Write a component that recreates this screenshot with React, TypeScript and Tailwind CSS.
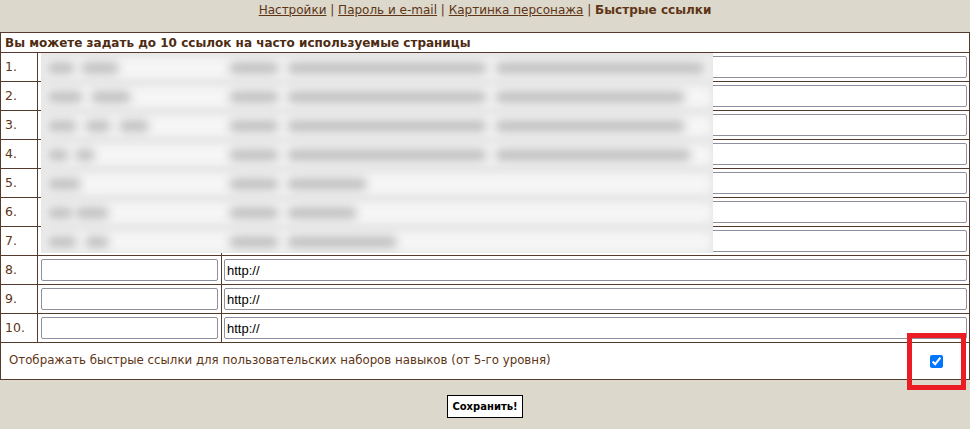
import React from 'react';

const rows = [1, 2, 3, 4, 5, 6, 7, 8, 9, 10];

// blurred redaction of rows 1-7: word segments [left, width] for name and url
const blobs: { name: [number, number][]; url: [number, number][] }[] = [
  { name: [[6, 28], [40, 38]], url: [[188, 50], [246, 200], [454, 210]] },
  { name: [[6, 36], [50, 40]], url: [[188, 50], [246, 200], [454, 190]] },
  { name: [[6, 30], [44, 26], [78, 30]], url: [[188, 50], [246, 200], [454, 190]] },
  { name: [[6, 22], [34, 20]], url: [[188, 50], [246, 200], [454, 196]] },
  { name: [[6, 34]], url: [[188, 50], [246, 80]] },
  { name: [[6, 26], [34, 34]], url: [[188, 50], [246, 70]] },
  { name: [[6, 30], [44, 24]], url: [[188, 50], [246, 110]] },
];

const Nav: React.FC = () => (
  <div className="h-[32px] pt-[1px] text-center text-[12px] text-[#5e3516]">
    <a href="#" className="underline">Настройки</a>
    <span> | </span>
    <a href="#" className="underline">Пароль и e-mail</a>
    <span> | </span>
    <a href="#" className="underline">Картинка персонажа</a>
    <span> | </span>
    <b>Быстрые ссылки</b>
  </div>
);

const Redacted: React.FC = () => (
  <div className="absolute left-[41px] top-[21px] flex h-[200px] w-[672px] flex-col overflow-hidden bg-[#e6e6e6]">
    {blobs.map((r, i) => (
      <div key={i} className="relative h-[29px] shrink-0">
        <div className="absolute left-[2px] right-[2px] top-[5px] h-[20px] bg-[#f6f6f6] blur-[5px]" />
        {[...r.name, ...r.url].map(([l, w], j) => (
          <div
            key={j}
            className="absolute top-[9px] h-[12px] rounded-full bg-[#c0c0c0] blur-[5px]"
            style={{ left: l, width: w }}
          />
        ))}
      </div>
    ))}
  </div>
);

export default function App() {
  return (
    <div className="min-h-[429px] bg-[#dcd8cb] font-['DejaVu_Sans',Verdana,sans-serif]">
      <Nav />
      <div className="relative">
        <table className="w-full border-collapse border border-[#563a2c] bg-white text-[#5e3516]">
          <tbody>
            <tr>
              <td colSpan={3} className="h-[20px] border border-[#563a2c] px-[4px] py-0 text-[12px] font-bold leading-[18px] text-[#4e2c12]">
                Вы можете задать до 10 ссылок на часто используемые страницы
              </td>
            </tr>
            {rows.map((n) => (
              <tr key={n}>
                <td className="h-[29px] w-[37px] border border-[#563a2c] px-[4px] py-0 text-[12.5px]">{n}.</td>
                <td className="w-[184px] border border-[#563a2c] px-[3px] py-0">
                  <input
                    type="text"
                    className="block h-[22px] w-full rounded-[2px] border border-[#8f8f9d] bg-white px-[2px] font-['Liberation_Sans',Arial,sans-serif] text-[13px] text-black outline-none"
                  />
                </td>
                <td className="border border-[#563a2c] px-[2px] py-0">
                  <input
                    type="text"
                    defaultValue={n > 7 ? 'http://' : ''}
                    className="block h-[22px] w-full rounded-[2px] border border-[#8f8f9d] bg-white px-[2px] font-['Liberation_Sans',Arial,sans-serif] text-[13px] text-black outline-none"
                  />
                </td>
              </tr>
            ))}
            <tr>
              <td colSpan={3} className="h-[37px] border border-[#563a2c] px-[8px] py-0">
                <div className="flex items-center justify-between text-[11.8px]">
                  <span>Отображать быстрые ссылки для пользовательских наборов навыков (от 5-го уровня)</span>
                  <input type="checkbox" defaultChecked className="mr-[18px] h-[13px] w-[13px]" />
                </div>
              </td>
            </tr>
          </tbody>
        </table>
        <Redacted />
        {/* red annotation box round the checkbox */}
        <div className="pointer-events-none absolute left-[907px] top-[301px] h-[57px] w-[59px] border-[5px] border-[#ec1c24]" />
      </div>
      <div className="flex justify-center pt-[15px]">
        <button className="h-[23px] border border-black bg-white px-[4px] text-[10px] font-bold text-black">
          Сохранить!
        </button>
      </div>
    </div>
  );
}
